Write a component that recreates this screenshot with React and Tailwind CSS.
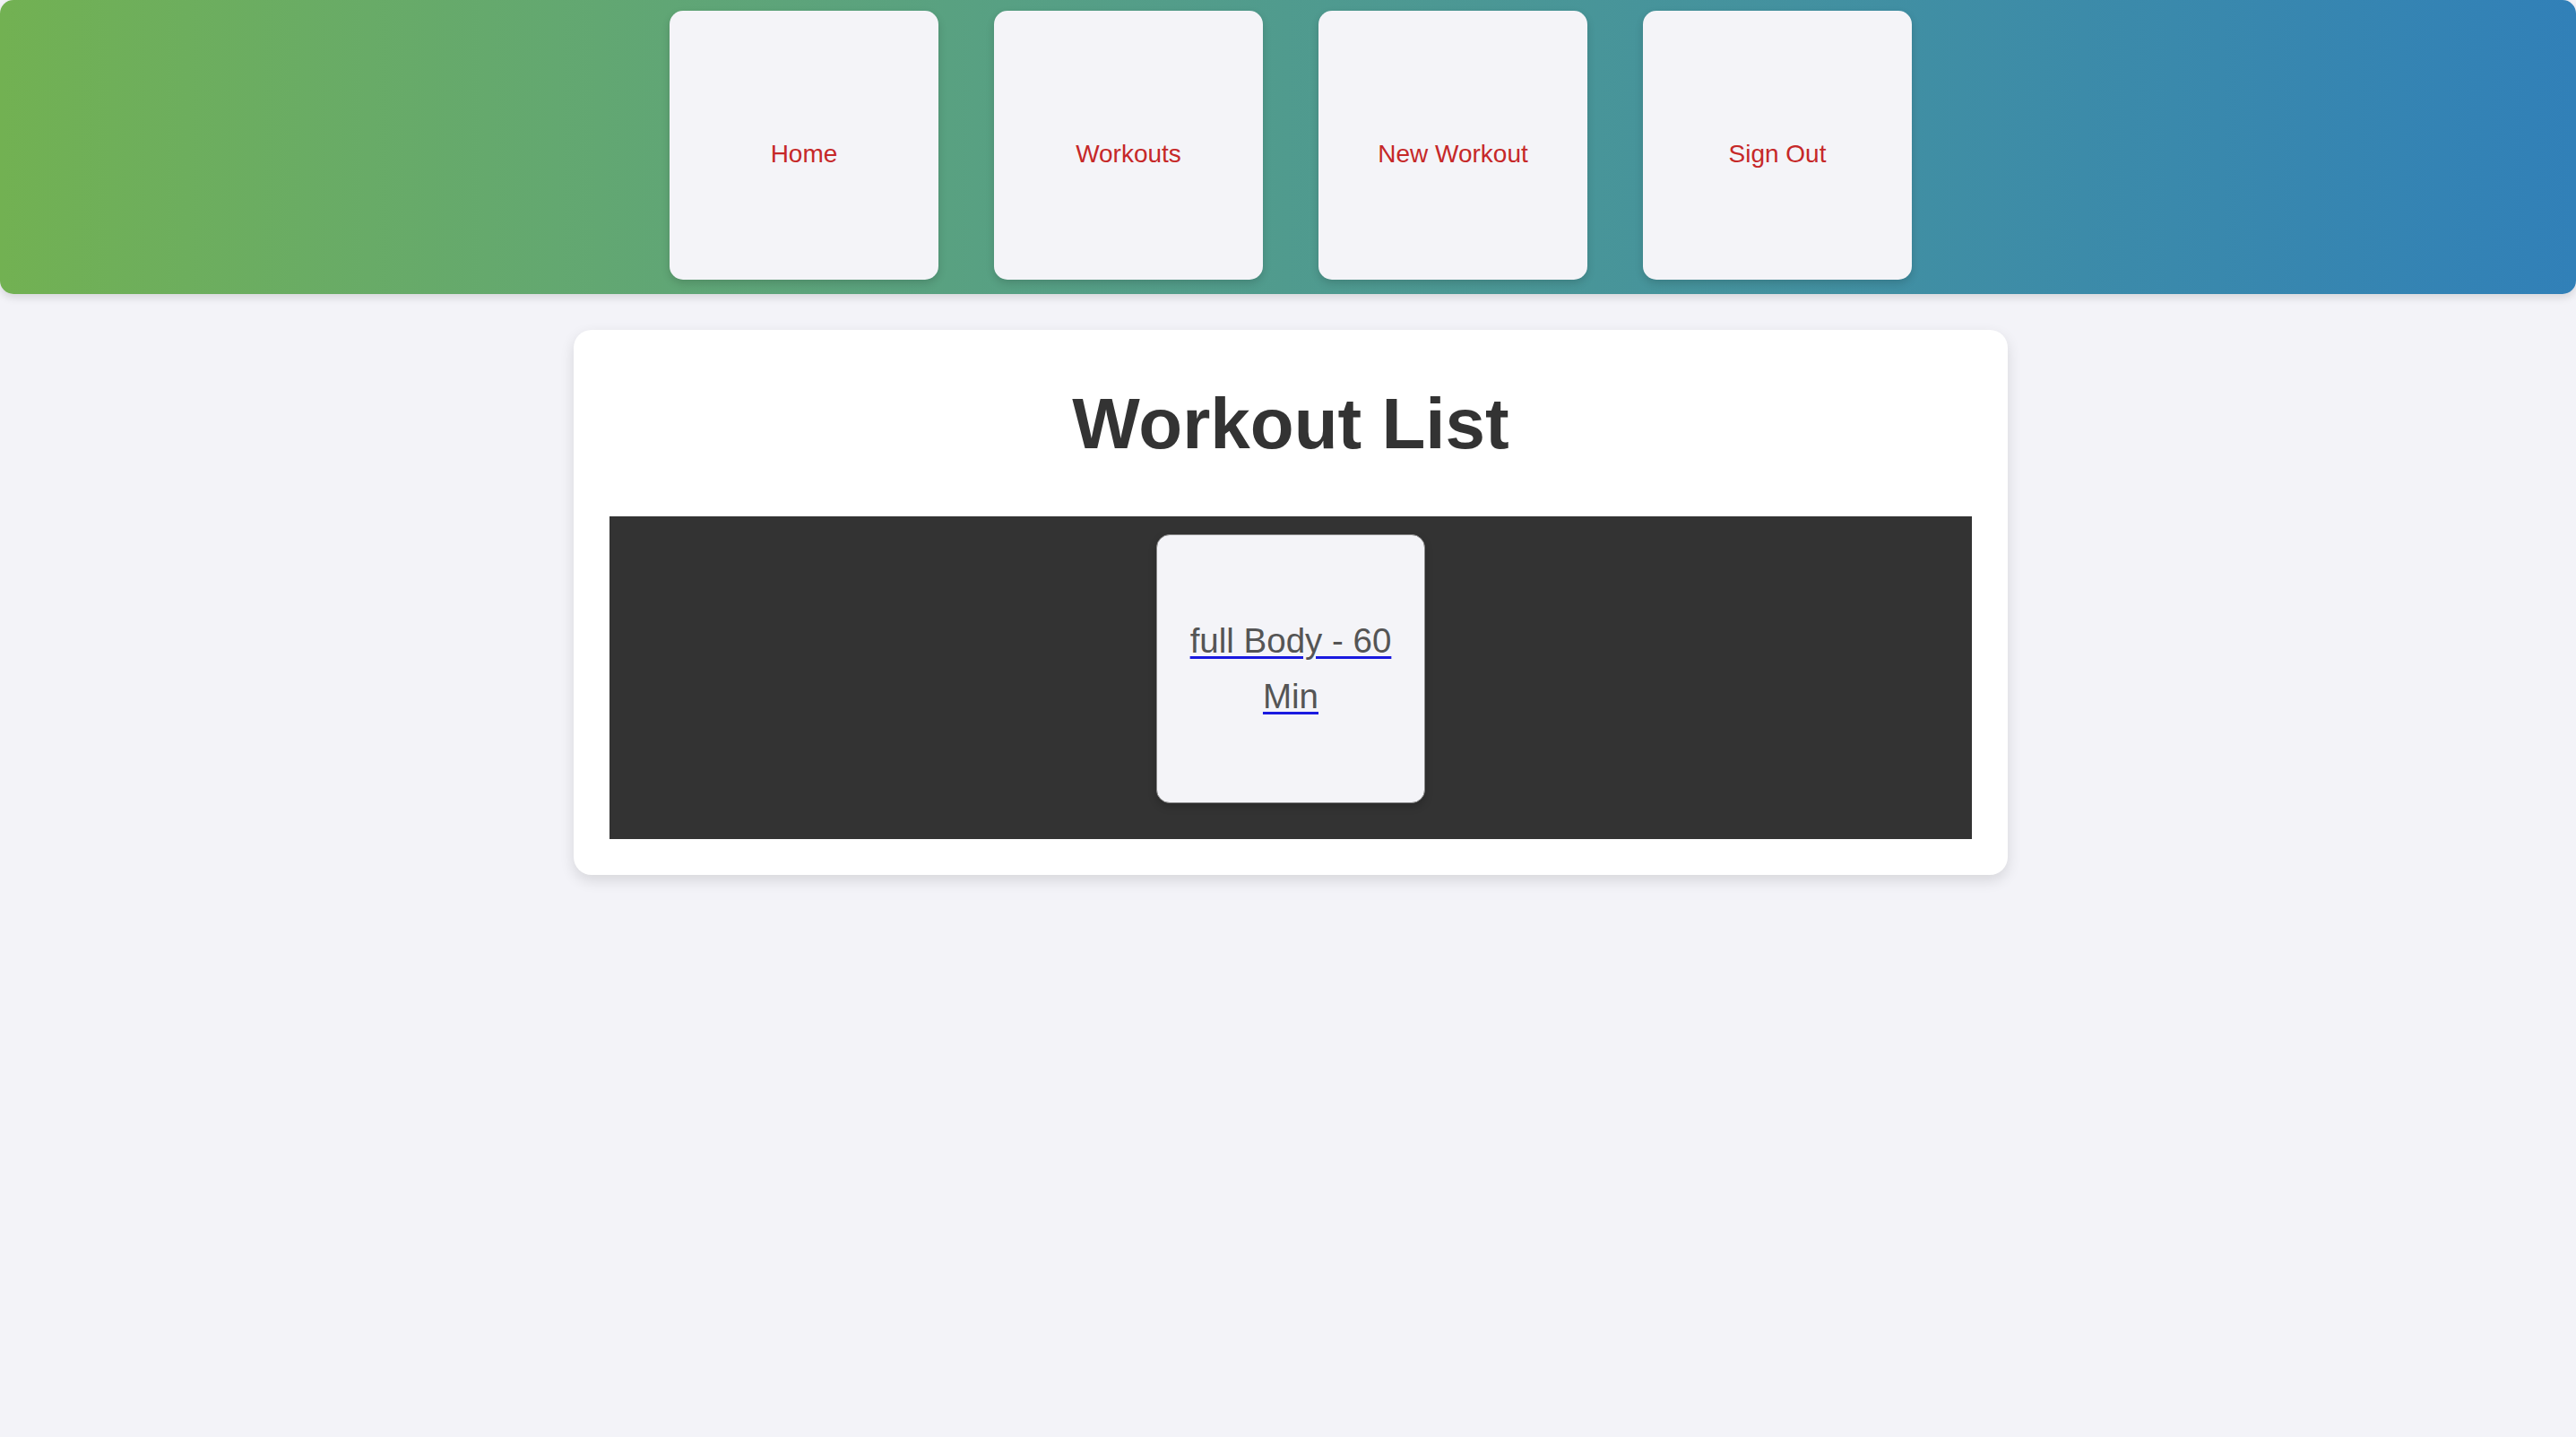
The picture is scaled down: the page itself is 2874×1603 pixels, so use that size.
import React from "react";

const navItems = ["Home", "Workouts", "New Workout", "Sign Out"];

export default function App() {
  return (
    <div
      className="min-h-[1603px] w-full bg-[#f3f3f8]"
      style={{ fontFamily: '"Liberation Sans", Arial, sans-serif' }}
    >
      <header className="flex justify-center gap-[62px] rounded-[15px] bg-gradient-to-r from-[#72b152] to-[#3180b8] pt-[12px] pb-[16px] pl-[6px] shadow-[0_4px_10px_rgba(0,0,0,0.12)]">
        {navItems.map((item) => (
          <a
            key={item}
            href="#"
            className="flex h-[300px] w-[300px] items-center justify-center rounded-[15px] bg-[#f4f4f8] pt-[20px] text-[28px] text-[#c62828] shadow-[0_4px_10px_rgba(0,0,0,0.15)]"
          >
            {item}
          </a>
        ))}
      </header>

      <div className="flex justify-center pl-[6px]">
        <main className="mt-[40px] w-[1600px] rounded-[20px] bg-white p-[40px] shadow-[0_6px_16px_rgba(0,0,0,0.12)]">
          <h1 className="mt-[19px] mb-[57px] text-center text-[80px] font-bold leading-[92px] text-[#333333]">
            Workout List
          </h1>
          <div className="flex h-[360px] justify-center bg-[#333333] pt-[20px]">
            <div className="flex h-[300px] w-[300px] items-center justify-center rounded-[15px] border border-[#8a8a8a] bg-[#f4f4f8] px-[20px] text-center shadow-[0_4px_10px_rgba(0,0,0,0.2)]">
              <a
                href="#"
                className="text-[38.5px] leading-[62px] text-[#555555] underline decoration-[#1a1ae0] decoration-[3px] underline-offset-[4px]"
              >
                full Body - 60 Min
              </a>
            </div>
          </div>
        </main>
      </div>
    </div>
  );
}
